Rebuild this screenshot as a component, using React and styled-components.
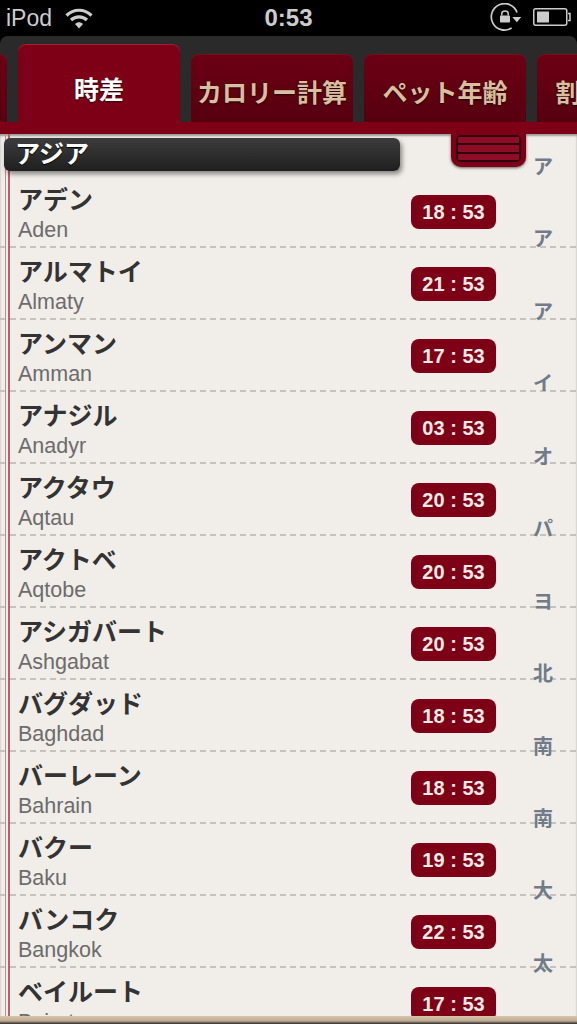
import styled, { createGlobalStyle } from "styled-components";

const GlobalStyle = createGlobalStyle`
  html, body {
    margin: 0;
    padding: 0;
    background: #000;
  }
  * {
    box-sizing: border-box;
  }
`;

const JP = `"Liberation Sans", "Noto Sans CJK JP", sans-serif`;

const cities = [
  ["アデン", "Aden", "18 : 53"],
  ["アルマトイ", "Almaty", "21 : 53"],
  ["アンマン", "Amman", "17 : 53"],
  ["アナジル", "Anadyr", "03 : 53"],
  ["アクタウ", "Aqtau", "20 : 53"],
  ["アクトベ", "Aqtobe", "20 : 53"],
  ["アシガバート", "Ashgabat", "20 : 53"],
  ["バグダッド", "Baghdad", "18 : 53"],
  ["バーレーン", "Bahrain", "18 : 53"],
  ["バクー", "Baku", "19 : 53"],
  ["バンコク", "Bangkok", "22 : 53"],
  ["ベイルート", "Beirut", "17 : 53"],
];

const indexChars = ["ア", "ア", "ア", "イ", "オ", "パ", "ヨ", "北", "南", "南", "大", "太"];

const tabs = [
  { id: "prev", label: "" },
  { id: "time", label: "時差", active: true },
  { id: "cal", label: "カロリー計算" },
  { id: "pet", label: "ペット年齢" },
  { id: "split", label: "割り勘計算" },
];

const App = () => {
  return (
    <>
      <GlobalStyle />
      <Page>
        <StatusBar>
          <StatusSide>
            <Carrier>iPod</Carrier>
            <WifiIcon />
          </StatusSide>
          <Clock>0:53</Clock>
          <StatusIcons>
            <LockIcon />
            <BatteryIcon />
          </StatusIcons>
        </StatusBar>

        <TabBar>
          {tabs.map((t) => (
            <Tab key={t.id} $active={t.active}>
              {t.label}
            </Tab>
          ))}
        </TabBar>
        <RedStrip />

        <Content>
          <Rules />
          <SectionHeader>アジア</SectionHeader>
          {cities.map(([name, en, time]) => (
            <Row key={en}>
              <div>
                <CityName>{name}</CityName>
                <CityEn>{en}</CityEn>
              </div>
              <TimeBadge>{time}</TimeBadge>
            </Row>
          ))}

          <Handle>
            <Grill>
              <span />
              <span />
              <span />
            </Grill>
          </Handle>

          <IndexColumn>
            {indexChars.map((c, i) => (
              <span key={i}>{c}</span>
            ))}
          </IndexColumn>
        </Content>

        <BottomEdge />
      </Page>
    </>
  );
};

export default App;

const WifiIcon = () => (
  <svg width="28" height="22" viewBox="0 0 28 22" style={{ marginLeft: 13 }}>
    <path d="M1.5 8.5C8.5 1.5 19.5 1.5 26.5 8.5" fill="none" stroke="#ccc" strokeWidth="3.2" />
    <path d="M6 13C10.5 8.8 17.5 8.8 22 13" fill="none" stroke="#ccc" strokeWidth="3.2" />
    <path d="M10 17C12.5 14.8 15.5 14.8 18 17L14 21.5Z" fill="#ccc" />
  </svg>
);

const LockIcon = () => (
  <svg width="32" height="28" viewBox="0 0 32 28">
    <path
      d="M21.6 25A13.2 13.2 0 1 1 27 9.5"
      fill="none"
      stroke="#ccc"
      strokeWidth="1.7"
    />
    <path d="M22.3 14H31.3L26.8 19.3Z" fill="#ccc" />
    <rect x="10" y="12.5" width="10" height="7" rx="0.8" fill="#ccc" />
    <path d="M11.8 12.5V10.5C11.8 7 18.2 7 18.2 10.5V12.5" fill="none" stroke="#ccc" strokeWidth="1.5" />
  </svg>
);

const BatteryIcon = () => (
  <svg width="38" height="18" viewBox="0 0 38 18" style={{ marginLeft: 11 }}>
    <rect x="0.75" y="0.75" width="33" height="16.5" rx="2" fill="none" stroke="#ccc" strokeWidth="1.5" />
    <rect x="4" y="3.5" width="12" height="11" fill="#ccc" />
    <path d="M35 5.5H37V12.5H35" fill="none" stroke="#ccc" strokeWidth="1.5" />
  </svg>
);

const Page = styled.div`
  width: 577px;
  height: 1024px;
  overflow: hidden;
  display: flex;
  flex-direction: column;
  font-family: ${JP};
`;

const StatusBar = styled.div`
  height: 36px;
  flex: none;
  padding: 0 6px 0 6px;
  background: #000;
  display: grid;
  grid-template-columns: 1fr auto 1fr;
  align-items: center;
  color: #ccc;
`;

const StatusSide = styled.div`
  display: flex;
  align-items: center;
`;

const StatusIcons = styled(StatusSide)`
  justify-content: flex-end;
  padding-bottom: 3px;
`;

const Carrier = styled.span`
  font-size: 23px;
`;

const Clock = styled.span`
  font-size: 24px;
  font-weight: bold;
`;

const TabBar = styled.div`
  height: 86px;
  flex: none;
  background: #2a2a2a;
  border-radius: 8px 8px 0 0;
  padding: 8px 0 0 0;
  display: flex;
  align-items: flex-end;
  gap: 11px;
  overflow: hidden;
  & > :first-child {
    margin-left: -155px;
  }
`;

const Tab = styled.div`
  flex: none;
  width: 162px;
  height: ${(p) => (p.$active ? "78px" : "68px")};
  border-radius: 8px 8px 0 0;
  display: flex;
  align-items: center;
  justify-content: center;
  font-weight: bold;
  white-space: nowrap;
  font-size: 25px;
  padding-top: ${(p) => (p.$active ? "9px" : "6px")};
  color: ${(p) => (p.$active ? "#fff" : "#d9bf9f")};
  text-shadow: 0 1px 2px rgba(0, 0, 0, 0.7);
  background: ${(p) =>
    p.$active ? "#7e0017" : "linear-gradient(#6c0013, #56000f)"};
  box-shadow: ${(p) =>
    p.$active ? "inset 0 1px 0 #a02036" : "inset 0 1px 0 #75101f"};
`;

const RedStrip = styled.div`
  height: 12px;
  flex: none;
  background: #7e0017;
`;

const Content = styled.div`
  position: relative;
  flex: 1;
  min-height: 0;
  overflow: hidden;
  background: #f1ede8;
  padding-top: 4px;
  box-shadow: inset 0 2px 2px rgba(0, 0, 0, 0.35);
`;

const Rules = styled.div`
  position: absolute;
  left: 5px;
  top: 0;
  bottom: 0;
  width: 5px;
  border-left: 1px solid #c48c96;
  border-right: 2px solid #b5606f;
`;

const SectionHeader = styled.div`
  position: relative;
  width: 396px;
  height: 33px;
  margin: 0 0 5px 4px;
  padding-left: 11px;
  border-radius: 6px;
  background: linear-gradient(#3c3c3c, #1f1f1f);
  box-shadow: 2px 3px 5px rgba(0, 0, 0, 0.45);
  color: #fff;
  font-size: 25px;
  font-weight: bold;
  line-height: 33px;
  text-shadow: 0 1px 1px #000;
`;

const Row = styled.div`
  height: 72px;
  padding: 0 81px 0 18px;
  display: flex;
  justify-content: space-between;
  align-items: center;
  background: repeating-linear-gradient(90deg, #c6c3be 0 6px, transparent 6px 10px)
    bottom / 100% 2px no-repeat;
`;

const CityName = styled.div`
  font-size: 25px;
  font-weight: bold;
  line-height: 38px;
  color: #333;
`;

const CityEn = styled.div`
  font-size: 21.5px;
  line-height: 26px;
  margin-top: -2px;
  color: #6c6c6c;
`;

const TimeBadge = styled.div`
  width: 85px;
  height: 34px;
  border-radius: 8px;
  background: #7e0017;
  color: #f1ebe6;
  font-size: 20px;
  font-weight: bold;
  line-height: 34px;
  text-align: center;
`;

const Handle = styled.div`
  position: absolute;
  left: 451px;
  top: 0;
  width: 75px;
  height: 33px;
  padding: 1px 5px 0;
  background: #7e0017;
  border-radius: 0 0 10px 10px;
  box-shadow: 0 1px 3px rgba(0, 0, 0, 0.6);
`;

const Grill = styled.div`
  height: 27px;
  padding: 2px;
  display: flex;
  flex-direction: column;
  gap: 2px;
  background: #2e0010;
  border-radius: 5px;
  span {
    flex: 1;
    background: #8e0c24;
    border-radius: 1px;
  }
`;

const IndexColumn = styled.div`
  position: absolute;
  right: 24px;
  top: 20px;
  display: flex;
  flex-direction: column;
  span {
    height: 72.45px;
    font-size: 20px;
    line-height: 26px;
    font-weight: bold;
    color: #6f7c88;
  }
`;

const BottomEdge = styled.div`
  height: 8px;
  flex: none;
  background: linear-gradient(#d6c4ad, #c2ad92 60%, #2a2a2a);
`;
